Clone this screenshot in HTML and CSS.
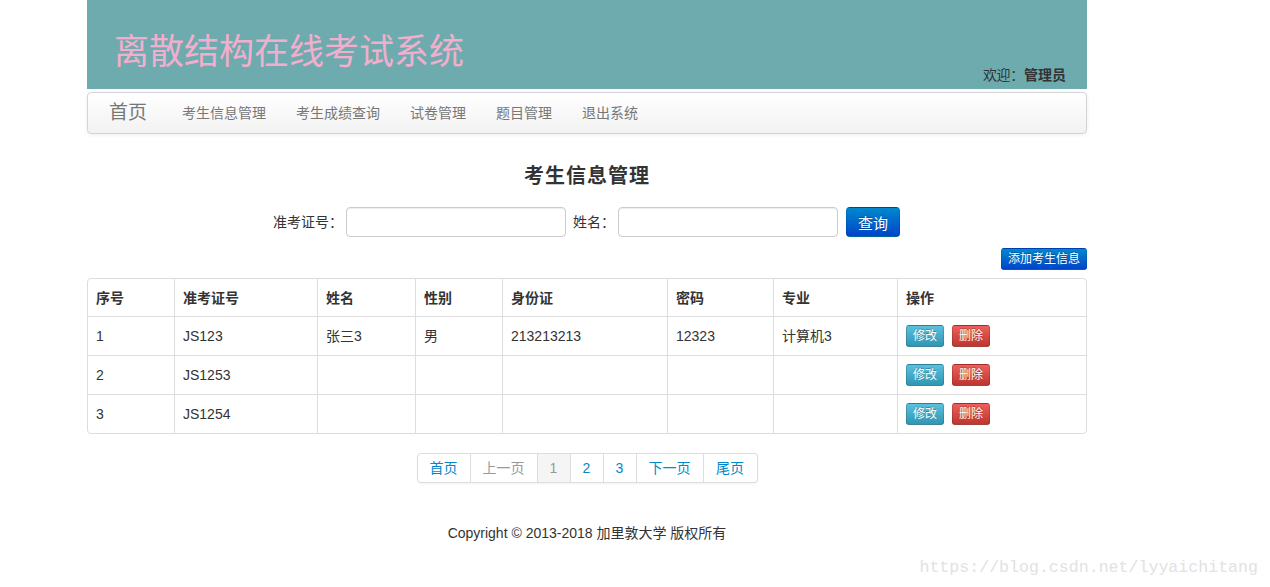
FILE: index.html
```html
<!DOCTYPE html>
<html lang="zh">
<head>
<meta charset="utf-8">
<title>离散结构在线考试系统</title>
<link rel="stylesheet" href="styles.css">
</head>
<body>
<div class="page">
  <header class="header">
    <h1 class="site-title">离散结构在线考试系统</h1>
    <div class="welcome">欢迎：<b>管理员</b></div>
  </header>
  <nav class="navbar">
    <a class="brand" href="#">首页</a>
    <ul class="nav">
      <li><a href="#">考生信息管理</a></li>
      <li><a href="#">考生成绩查询</a></li>
      <li><a href="#">试卷管理</a></li>
      <li><a href="#">题目管理</a></li>
      <li><a href="#">退出系统</a></li>
    </ul>
  </nav>
  <main class="content">
    <h2 class="page-title">考生信息管理</h2>
    <form class="search">
      <label class="lbl1">准考证号：</label><input type="text" class="input">
      <label class="lbl2">姓名：</label><input type="text" class="input">
      <button type="button" class="btn btn-primary">查询</button>
    </form>
    <div class="toolbar"><button type="button" class="btn btn-primary btn-small">添加考生信息</button></div>
    <table class="table">
      <colgroup>
        <col style="width:86px"><col style="width:143px"><col style="width:98px"><col style="width:87px"><col style="width:165px"><col style="width:106px"><col style="width:124px"><col>
      </colgroup>
      <thead>
        <tr><th>序号</th><th>准考证号</th><th>姓名</th><th>性别</th><th>身份证</th><th>密码</th><th>专业</th><th>操作</th></tr>
      </thead>
      <tbody>
        <tr><td>1</td><td>JS123</td><td>张三3</td><td>男</td><td>213213213</td><td>12323</td><td>计算机3</td><td><button class="btn btn-mini btn-info">修改</button><button class="btn btn-mini btn-danger">删除</button></td></tr>
        <tr><td>2</td><td>JS1253</td><td></td><td></td><td></td><td></td><td></td><td><button class="btn btn-mini btn-info">修改</button><button class="btn btn-mini btn-danger">删除</button></td></tr>
        <tr><td>3</td><td>JS1254</td><td></td><td></td><td></td><td></td><td></td><td><button class="btn btn-mini btn-info">修改</button><button class="btn btn-mini btn-danger">删除</button></td></tr>
      </tbody>
    </table>
    <div class="pagination">
      <ul>
        <li><a href="#" class="w1">首页</a></li>
        <li><span class="disabled w2">上一页</span></li>
        <li><span class="active w3">1</span></li>
        <li><a href="#" class="w3">2</a></li>
        <li><a href="#" class="w3">3</a></li>
        <li><a href="#" class="w2">下一页</a></li>
        <li><a href="#" class="w1">尾页</a></li>
      </ul>
    </div>
    <footer class="footer">Copyright © 2013-2018 加里敦大学 版权所有</footer>
  </main>
</div>
<div class="watermark">https://blog.csdn.net/lyyaichitang</div>
</body>
</html>
```
FILE: styles.css
```css
* { box-sizing: border-box; }
html, body { margin: 0; padding: 0; background: #fff; }
body {
  font-family: "Liberation Sans", "Noto Sans CJK SC", Arial, sans-serif;
  font-size: 14px;
  color: #333;
  line-height: 20px;
  overflow: hidden;
  height: 587px;
  position: relative;
}
.page { width: 1000px; margin-left: 87px; }
.header {
  height: 89px;
  background: #6eabae;
  display: flex;
  justify-content: space-between;
  align-items: flex-end;
  padding: 0 21px 4px 27px;
}
.site-title {
  margin: 0 0 13px 0;
  font-size: 35px;
  line-height: 40px;
  font-weight: normal;
  color: #f2afcd;
}
.welcome { font-size: 14px; color: #333; line-height: 20px; letter-spacing: -0.3px; }
.welcome b { font-weight: bold; letter-spacing: 0; }
.navbar {
  margin-top: 3px;
  height: 42px;
  border: 1px solid #d4d4d4;
  border-radius: 4px;
  background: linear-gradient(#ffffff, #f2f2f2);
  box-shadow: 0 1px 4px rgba(0,0,0,0.065);
  display: flex;
  align-items: center;
  padding-left: 21px;
}
.brand {
  font-size: 19px;
  color: #777;
  text-decoration: none;
  margin-right: 20px;
  line-height: 20px;
}
.nav { list-style: none; margin: 0; padding: 0; display: flex; }
.nav a {
  display: block;
  padding: 10px 15px;
  color: #777;
  text-decoration: none;
  font-size: 14px;
}
.content { display: flex; flex-direction: column; }
.page-title {
  margin: 30px 0 0;
  text-align: center;
  font-size: 20px;
  line-height: 24px;
  font-weight: bold;
  color: #333;
  letter-spacing: 1px;
}
.search {
  margin-top: 19px;
  display: flex;
  align-items: center;
  padding-left: 186px;
  height: 30px;
}
.search label { color: #333; font-size: 14px; white-space: nowrap; }
.search .lbl1 { width: 70px; margin-right: 3px; }
.search .lbl2 { width: 42px; margin-left: 7px; margin-right: 3px; }
.input {
  width: 220px;
  height: 30px;
  border: 1px solid #ccc;
  border-radius: 4px;
  box-shadow: inset 0 1px 1px rgba(0,0,0,0.075);
  padding: 4px 6px;
  font-size: 14px;
  margin: 0;
}
.btn {
  font-family: "Liberation Sans", "Noto Sans CJK SC", sans-serif;
  border-radius: 4px;
  cursor: pointer;
  color: #fff;
  text-shadow: 0 -1px 0 rgba(0,0,0,0.25);
  margin: 0;
}
.btn-primary {
  background: linear-gradient(#0088cc, #0044cc);
  border: 1px solid #0044aa;
  border-color: rgba(0,0,0,0.1) rgba(0,0,0,0.1) rgba(0,0,0,0.25);
}
.search .btn-primary {
  margin-left: 8px;
  width: 54px;
  height: 30px;
  font-size: 15px;
  padding: 0;
}
.toolbar { display: flex; justify-content: flex-end; margin-top: 11px; }
.btn-small {
  height: 22px;
  padding: 0 6px;
  font-size: 12px;
  line-height: 20px;
  border-radius: 3px;
}
.table {
  margin-top: 8px;
  width: 1000px;
  border-collapse: separate;
  border-spacing: 0;
  border: 1px solid #ddd;
  border-radius: 4px;
  table-layout: fixed;
}
.table th, .table td {
  text-align: left;
  padding: 8px;
  border-left: 1px solid #ddd;
  border-top: 1px solid #ddd;
  vertical-align: middle;
  font-size: 14px;
  line-height: 20px;
}
.table th { height: 37px; font-weight: bold; color: #333; border-top: 0; }
.table td { height: 39px; padding-top: 7px; padding-bottom: 7px; color: #333; }
.table th:first-child, .table td:first-child { border-left: 0; }
.btn-mini {
  width: 38px;
  height: 22px;
  padding: 0;
  font-size: 12px;
  line-height: 20px;
  border-radius: 3px;
  margin-right: 8px;
  vertical-align: middle;
}
.btn-info {
  background: linear-gradient(#5bc0de, #2f96b4);
  border: 1px solid rgba(0,0,0,0.15);
  border-bottom-color: rgba(0,0,0,0.3);
}
.btn-danger {
  background: linear-gradient(#ee5f5b, #bd362f);
  border: 1px solid rgba(0,0,0,0.15);
  border-bottom-color: rgba(0,0,0,0.3);
}
.pagination { display: flex; justify-content: center; margin-top: 19px; }
.pagination ul {
  list-style: none;
  margin: 0;
  padding: 0;
  display: flex;
  border-radius: 4px;
  box-shadow: 0 1px 2px rgba(0,0,0,0.05);
}
.pagination li a, .pagination li span {
  display: block;
  height: 30px;
  line-height: 28px;
  text-align: center;
  border: 1px solid #ddd;
  border-left-width: 0;
  text-decoration: none;
  color: #0088cc;
  font-size: 14px;
  background: #fff;
}
.pagination li:first-child a { border-left-width: 1px; border-radius: 4px 0 0 4px; }
.pagination li:last-child a { border-radius: 0 4px 4px 0; }
.pagination .w1 { width: 54px; }
.pagination .w2 { width: 67px; }
.pagination .w3 { width: 33px; }
.pagination .disabled { color: #999; }
.pagination .active { color: #999; background: #f5f5f5; }
.footer {
  margin-top: 40px;
  text-align: center;
  font-size: 14px;
  color: #333;
}
.watermark {
  position: absolute;
  right: 12px;
  bottom: 9px;
  font-family: "Liberation Mono", "DejaVu Sans Mono", monospace;
  font-size: 16.6px;
  color: #e2e2e2;
}
```
